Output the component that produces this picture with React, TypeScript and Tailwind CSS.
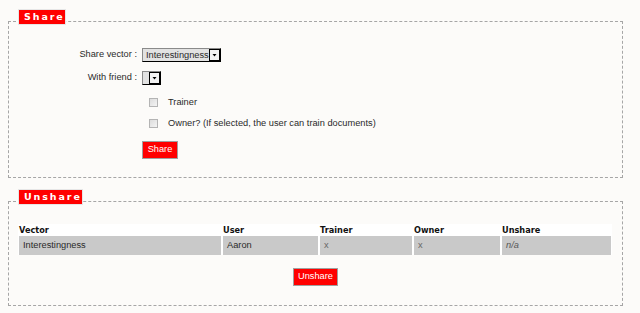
import React from "react";

function Legend({ label }: { label: string }) {
  return (
    <div className="relative z-10 ml-[10px] flex h-[16px] items-center border border-[#e6e6e6] bg-[#ff0000] pl-[5px] font-['DejaVu_Sans',Verdana,sans-serif] text-[9.5px] font-bold tracking-[1.9px] text-white">
      {label}
    </div>
  );
}

function Select({ value, width }: { value: string; width: string }) {
  return (
    <div className={`flex h-[14px] ${width} items-stretch border border-t-[#8a8a8a] border-l-[#8a8a8a] border-r-black border-b-black bg-[#e2e2e2]`}>
      <div className="flex-1 overflow-hidden whitespace-nowrap pl-[3px] leading-[12px]">{value}</div>
      <div className="flex w-[11px] items-center justify-center border border-black bg-[#f2f2f2]">
        <svg width="5" height="3" viewBox="0 0 5 3">
          <path d="M0.5 0h4L2.5 2.5z" fill="#000" />
        </svg>
      </div>
    </div>
  );
}

function Checkbox() {
  return <div className="ml-[7px] h-[9px] w-[9px] border border-[#b4b4b4] bg-gradient-to-br from-[#dcdcdc] to-[#f4f4f4]" />;
}

const rows = [{ vector: "Interestingness", user: "Aaron", trainer: "x", owner: "x", unshare: "n/a" }];

export default function App() {
  return (
    <div className="min-h-screen bg-[#fcfbf9] px-2 pt-[9px] font-['Liberation_Sans',Arial,sans-serif] text-[9.25px] text-[#2a2a2a]">
      <section className="flex flex-col items-start">
        <Legend label="Share" />
        <div className="-mt-[4px] h-[157px] w-[615px] border border-dashed border-[#a6a6a6]">
          <div className="mt-[26px] grid grid-cols-[128px_1fr] items-center gap-x-[5px]">
            <div className="text-right">Share vector :</div>
            <Select value="Interestingness" width="w-[79px]" />
          </div>
          <div className="mt-[9px] grid grid-cols-[128px_1fr] items-center gap-x-[5px]">
            <div className="text-right">With friend :</div>
            <Select value="" width="w-[19px]" />
          </div>
          <div className="mt-[11px] grid h-[12px] grid-cols-[128px_1fr] items-center gap-x-[5px]">
            <div />
            <div className="flex items-center gap-x-[10px]">
              <Checkbox />
              <span>Trainer</span>
            </div>
          </div>
          <div className="mt-[9px] grid h-[12px] grid-cols-[128px_1fr] items-center gap-x-[5px]">
            <div />
            <div className="flex items-center gap-x-[10px]">
              <Checkbox />
              <span>Owner? (If selected, the user can train documents)</span>
            </div>
          </div>
          <div className="mt-[12px] grid grid-cols-[128px_1fr] gap-x-[5px]">
            <div />
            <button className="h-[18px] w-[36px] border border-[#a0a0a0] bg-[#ff0000] text-white">Share</button>
          </div>
        </div>
      </section>

      <section className="mt-[11px] flex flex-col items-start">
        <Legend label="Unshare" />
        <div className="-mt-[4px] h-[105px] w-[615px] border border-dashed border-[#a6a6a6]">
          <div className="ml-[9px] mt-[22px] w-[594px] bg-white px-[1px]">
            <div className="grid h-[12px] grid-cols-[202px_95px_92px_86px_109px] items-center gap-x-[2px] font-['DejaVu_Sans',Verdana,sans-serif] text-[8.2px] font-bold text-[#111]">
              <div>Vector</div>
              <div>User</div>
              <div>Trainer</div>
              <div>Owner</div>
              <div>Unshare</div>
            </div>
            {rows.map((r, i) => (
              <div key={i} className="grid h-[19px] grid-cols-[202px_95px_92px_86px_109px] gap-x-[2px]">
                <div className="flex items-center bg-[#c9c9c9] pl-[4px]">{r.vector}</div>
                <div className="flex items-center bg-[#c9c9c9] pl-[4px]">{r.user}</div>
                <div className="flex items-center bg-[#c9c9c9] pl-[4px] text-[#666]">{r.trainer}</div>
                <div className="flex items-center bg-[#c9c9c9] pl-[4px] text-[#666]">{r.owner}</div>
                <div className="flex items-center bg-[#c9c9c9] pl-[4px] italic text-[#555]">{r.unshare}</div>
              </div>
            ))}
          </div>
          <div className="mt-[13px] flex justify-center">
            <button className="h-[18px] w-[45px] border border-[#a0a0a0] bg-[#ff0000] text-white">Unshare</button>
          </div>
        </div>
      </section>
    </div>
  );
}
